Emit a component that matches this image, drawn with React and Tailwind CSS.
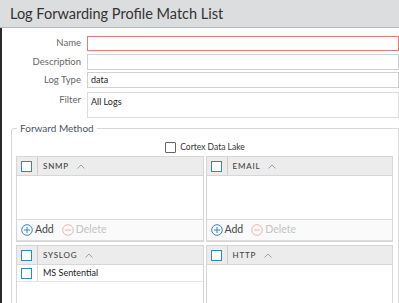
import React from "react";

const font = { fontFamily: "Lato, 'Open Sans', sans-serif" };

function Check({ className = "" }) {
  return <div className={`w-[11px] h-[11px] border border-[#2f88c4] bg-white ${className}`} />;
}

function Chevron() {
  return (
    <svg width="8" height="5" viewBox="0 0 8 5" className="ml-[8px]">
      <path d="M0.5 4.5 L4 1 L7.5 4.5" fill="none" stroke="#a0a0a0" strokeWidth="1" />
    </svg>
  );
}

function Header({ title }) {
  return (
    <div className="flex h-[19px] bg-[#ececec] border-b border-[#d6d6d6]">
      <div className="w-[21px] flex items-center pl-[4px] border-r border-[#cfcfcf]">
        <Check />
      </div>
      <div className="flex items-center pl-[5px] text-[8px] font-medium tracking-[0.1em] text-[#444]">
        {title}
        <Chevron />
      </div>
    </div>
  );
}

function Toolbar() {
  return (
    <div className="flex items-center h-[22px] border-t border-b border-[#dcdcdc] bg-[#fafafa] pl-[4px]">
      <svg width="12" height="12" viewBox="0 0 12 12">
        <circle cx="6" cy="6" r="5.3" fill="none" stroke="#3a86c0" strokeWidth="1" />
        <path d="M6 3 V9 M3 6 H9" stroke="#3a86c0" strokeWidth="1" />
      </svg>
      <span className="ml-[2px] text-[10.5px] text-[#444]">Add</span>
      <svg width="12" height="12" viewBox="0 0 12 12" className="ml-[8px]">
        <circle cx="6" cy="6" r="5.3" fill="none" stroke="#efb4b4" strokeWidth="1" />
        <path d="M3 6 H9" stroke="#efb4b4" strokeWidth="1" />
      </svg>
      <span className="ml-[2px] text-[10.5px] text-[#c4c4c4]">Delete</span>
    </div>
  );
}

export default function App() {
  return (
    <div className="w-[399px] h-[303px] bg-white overflow-hidden text-[#333]" style={font}>
      <div className="h-[28px] bg-[#dcdddf] border-b border-[#b6babe] flex items-center pl-[10px] text-[14.5px] text-[#333]">
        Log Forwarding Profile Match List
      </div>
      <div className="border-l-2 border-[#2a2a2a] h-[275px]">
        <div className="pt-[8px] flex flex-col">
          <div className="flex items-center h-[15px]">
            <div className="w-[81px] text-right text-[9.5px] text-[#666]">Name</div>
            <div className="ml-[6px] w-[320px] h-[15px] border border-[#e47c7c]" />
          </div>
          <div className="flex items-center h-[16px] mt-[3px]">
            <div className="w-[81px] text-right text-[9.5px] text-[#666]">Description</div>
            <div className="ml-[6px] w-[320px] h-[16px] border border-[#cfd1d3]" />
          </div>
          <div className="flex items-center h-[16px] mt-[2px]">
            <div className="w-[81px] text-right text-[9.5px] text-[#666]">Log Type</div>
            <div className="ml-[6px] w-[320px] h-[16px] border border-[#cfd1d3] flex items-center pl-[3px] text-[9px] text-[#222]">data</div>
          </div>
          <div className="flex items-start h-[26px] mt-[4px]">
            <div className="w-[81px] text-right text-[9.5px] text-[#666] pt-[1px]">Filter</div>
            <div className="ml-[6px] w-[320px] h-[26px] border border-[#dcdcdc] pl-[3px] pt-[2px] text-[9px] text-[#222]">All Logs</div>
          </div>
        </div>
        <fieldset className="mt-[5px] ml-[9px] w-[388px] h-[200px] border border-[#d8d8d8] rounded-tl-[3px]">
          <legend className="ml-[5px] px-[3px] text-[10px] leading-[11px] text-[#4a5563]">Forward Method</legend>
          <div className="flex items-center justify-center h-[14px] mt-[6px]">
            <div className="w-[11px] h-[11px] border border-[#666] rounded-[1px]" />
            <span className="ml-[4px] text-[8.5px] text-[#333]">Cortex Data Lake</span>
          </div>
          <div className="grid grid-cols-2 gap-x-[2px] gap-y-[3px] pl-[4px] pr-[5px] mt-[2px]">
            <div className="border border-[#d6d6d6]">
              <Header title="SNMP" />
              <div className="h-[43px]" />
              <Toolbar />
            </div>
            <div className="border border-[#d6d6d6]">
              <Header title="EMAIL" />
              <div className="h-[43px]" />
              <Toolbar />
            </div>
            <div className="border border-[#d6d6d6] h-[70px]">
              <Header title="SYSLOG" />
              <div className="flex h-[17px] border-b border-[#e8e8e8]">
                <div className="w-[21px] flex items-center pl-[4px] border-r border-[#dcdcdc]">
                  <Check />
                </div>
                <div className="flex items-center pl-[5px] text-[9px] text-[#222]">MS Sentential</div>
              </div>
            </div>
            <div className="border border-[#d6d6d6] h-[70px]">
              <Header title="HTTP" />
            </div>
          </div>
        </fieldset>
      </div>
    </div>
  );
}
